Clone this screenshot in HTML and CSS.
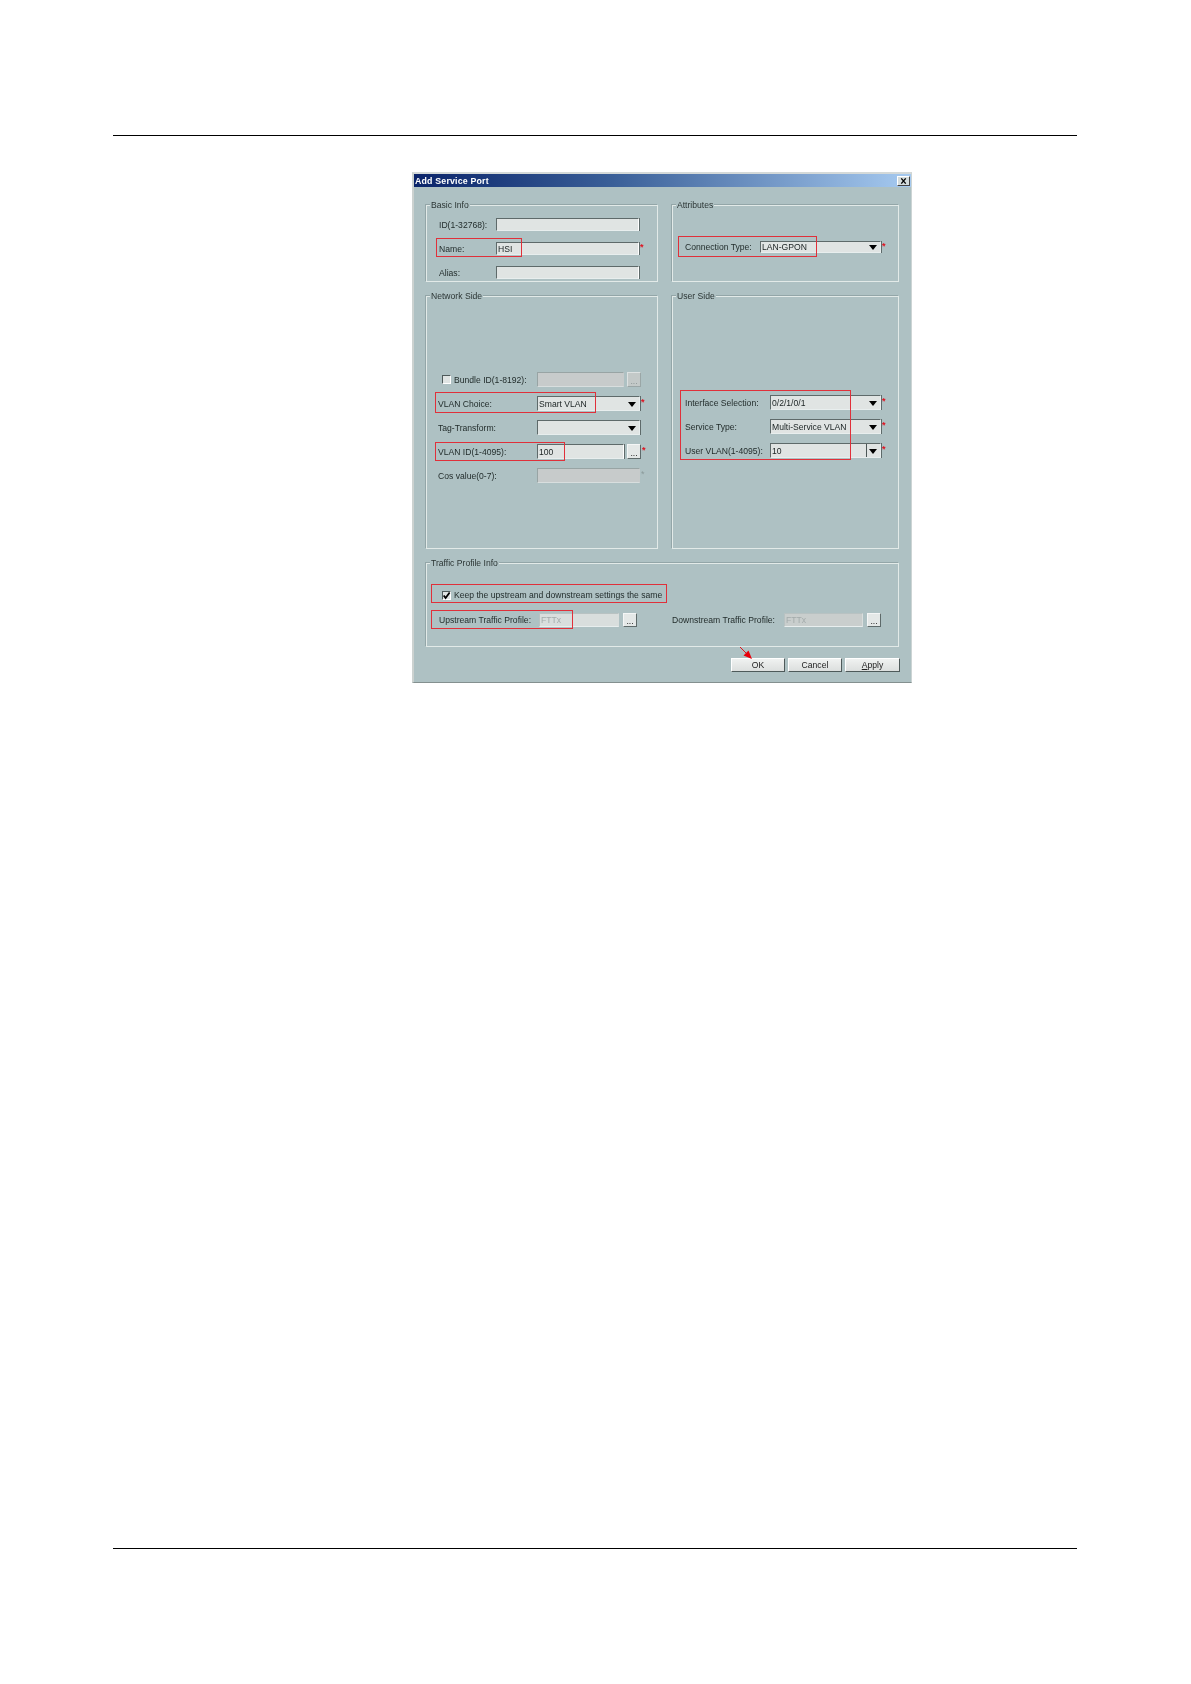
FILE: index.html
```html
<!DOCTYPE html>
<html lang="en">
<head>
<meta charset="utf-8">
<title>Add Service Port</title>
<link rel="stylesheet" href="styles.css">
</head>
<body>
<div class="page">
  <div class="rule rule-top"></div>
  <div class="figure">
    <div class="dialog">
      <div class="titlebar">
        <span class="title">Add Service Port</span>
        <span class="close"><svg viewBox="0 0 11 9" width="11" height="8"><path d="M3 1.5 L8 7.5 M8 1.5 L3 7.5" stroke="#000" stroke-width="1.5" fill="none"/></svg></span>
      </div>
      <div class="body">
        <div class="top-grid">
          <div class="group g-basic">
            <div class="legend">Basic Info</div>
            <div class="rows">
              <div class="row"><span class="label">ID(1-32768):</span><span class="field"></span></div>
              <div class="row"><span class="label">Name:</span><span class="field">HSI</span><span class="star">*</span></div>
              <div class="row"><span class="label">Alias:</span><span class="field"></span></div>
            </div>
          </div>
          <div class="group g-attr">
            <div class="legend">Attributes</div>
            <div class="rows">
              <div class="row"><span class="label">Connection Type:</span><span class="field select">LAN-GPON<i class="caret"></i></span><span class="star">*</span></div>
            </div>
          </div>
          <div class="group g-net">
            <div class="legend">Network Side</div>
            <div class="rows">
              <div class="row"><span class="label check-label"><span class="check"></span>Bundle ID(1-8192):</span><span class="field off narrow"></span><span class="more off-btn">...</span></div>
              <div class="row"><span class="label">VLAN Choice:</span><span class="field select">Smart VLAN<i class="caret"></i></span><span class="star">*</span></div>
              <div class="row"><span class="label">Tag-Transform:</span><span class="field select"><i class="caret"></i></span></div>
              <div class="row"><span class="label">VLAN ID(1-4095):</span><span class="field narrow">100</span><span class="more">...</span><span class="star">*</span></div>
              <div class="row"><span class="label">Cos value(0-7):</span><span class="field off"></span><span class="star star-off">*</span></div>
            </div>
          </div>
          <div class="group g-user">
            <div class="legend">User Side</div>
            <div class="rows">
              <div class="row"><span class="label">Interface Selection:</span><span class="field select">0/2/1/0/1<i class="caret"></i></span><span class="star">*</span></div>
              <div class="row"><span class="label">Service Type:</span><span class="field select">Multi-Service VLAN<i class="caret"></i></span><span class="star">*</span></div>
              <div class="row"><span class="label">User VLAN(1-4095):</span><span class="field select combo">10<i class="caret"></i></span><span class="star">*</span></div>
            </div>
          </div>
        </div>
        <div class="group g-traffic">
          <div class="legend">Traffic Profile Info</div>
          <div class="row keep"><span class="check checked"><svg viewBox="0 0 8 8" width="9" height="9"><path d="M1.5 4 L3.2 6.2 L6.8 1.4" stroke="#000" stroke-width="1.6" fill="none"/></svg></span><span class="keep-text">Keep the upstream and downstream settings the same</span></div>
          <div class="row profiles">
            <span class="label up-label">Upstream Traffic Profile:</span><span class="field ghost up-field">FTTx</span><span class="more">...</span>
            <span class="label down-label">Downstream Traffic Profile:</span><span class="field ghost off down-field">FTTx</span><span class="more">...</span>
          </div>
        </div>
        <div class="actions">
          <span class="btn">OK</span>
          <span class="btn">Cancel</span>
          <span class="btn"><u>A</u>pply</span>
        </div>
      </div>
      <span class="mark m-name"></span>
      <span class="mark m-conn"></span>
      <span class="mark m-choice"></span>
      <span class="mark m-vlan"></span>
      <span class="mark m-user"></span>
      <span class="mark m-keep"></span>
      <span class="mark m-up"></span>
      <svg class="arrow" viewBox="0 0 14 14" width="14" height="14"><path d="M1 1 L9 9" stroke="#e0141c" stroke-width="1" fill="none"/><path d="M13 13 L4.5 9.5 L9.5 4.5 Z" fill="#e8000c"/></svg>
    </div>
  </div>
  <div class="rule rule-bottom"></div>
</div>
</body>
</html>
```
FILE: styles.css
```css
* { box-sizing: border-box; }
html, body { margin: 0; padding: 0; background: #fff; }
.page {
  height: 1684px;
  padding: 135px 114px 135px 113px;
  display: flex;
  flex-direction: column;
  font-family: "Liberation Sans", Arial, sans-serif;
}
.rule { height: 1px; background: #000; flex: none; }
.rule-bottom { margin-top: auto; }
.figure { margin: 36px 0 0 299px; }

.dialog {
  position: relative;
  width: 500px;
  height: 511px;
  background: #aec1c3;
  border-style: solid;
  border-width: 2px 1px 1px 2px;
  border-color: #d4d9d8 #ccd4d4 #84908f #ccd2d0;
  font-size: 8.6px;
  line-height: 12px;
  color: #1f2928;
  filter: blur(0.45px);
}
.titlebar {
  height: 13px;
  display: flex;
  align-items: center;
  justify-content: space-between;
  padding: 0 1px 0 1px;
  background: linear-gradient(90deg, #0a246a 0%, #3a5f98 40%, #a6caf0 100%);
}
.title { color: #fff; font-weight: 700; font-size: 8.8px; letter-spacing: .18px; }
.close {
  width: 13px;
  height: 10px;
  display: flex;
  align-items: center;
  justify-content: center;
  background: #d4dcdc;
  border: 1px solid;
  border-color: #fff #444 #444 #fff;
}
.body { padding: 18px 10px 0 12px; }
.top-grid {
  display: grid;
  grid-template-columns: 232px 227px;
  grid-template-rows: 77px 253px;
  column-gap: 14px;
  row-gap: 14px;
}
.group {
  border: 1px solid #e2eae8;
  box-shadow: -1px -1px 0 #93a6a8;
}
.legend {
  width: fit-content;
  height: 12px;
  margin: -7px 0 0 3px;
  padding: 0 1px;
  background: #aec1c3;
  color: #2b3534;
}
.rows { display: flex; flex-direction: column; }
.row { display: flex; align-items: center; }
.label { flex: none; white-space: nowrap; }
.field {
  flex: none;
  position: relative;
  display: flex;
  align-items: center;
  height: 100%;
  padding-left: 1px;
  background: #e0e4e3;
  border: 1px solid;
  border-color: #5e6a6a #fff #e8eeee #5e6a6a;
  box-shadow: 1px 0 0 #5e6a6a;
  color: #1a2222;
  white-space: nowrap;
}
.field.off { background: #c7cbcb; border-color: #98a4a4 #c7cbcb #d8dede #98a4a4; box-shadow: none; }
.field.ghost { color: #a3abab; background: #d9dedd; border-color: #b8c2c2 #d9dedd #e8eeee #b8c2c2; box-shadow: none; }
.field.ghost.off { background: #c9cecd; }
.select { border-color: #5e6a6a #e8eeee #e8eeee #5e6a6a; }
.caret {
  position: absolute;
  right: 3px;
  top: 50%;
  margin-top: -2px;
  border-style: solid;
  border-width: 5px 4px 0;
  border-color: #000 transparent transparent;
}
.combo::after {
  content: "";
  position: absolute;
  right: 13px;
  top: 0;
  bottom: 0;
  width: 1px;
  background: #4c5757;
}
.star { color: #e0101e; font-size: 9px; font-weight: 700; margin: -3px 0 0 1px; width: 5px; }
.star-off { color: #8a9a9a; font-weight: 400; }
.more {
  flex: none;
  width: 14px;
  height: 100%;
  margin-left: 3px;
  display: flex;
  align-items: flex-end;
  justify-content: center;
  background: #e4e8e7;
  border: 1px solid;
  border-color: #f4f6f6 #5e6a6a #5e6a6a #f4f6f6;
  line-height: 10px;
  color: #222;
}
.off-btn { background: #c3c9c8; border-color: #dde2e2 #9aa6a6 #9aa6a6 #dde2e2; color: #8c9696; }

.g-basic .rows { padding: 7px 0 0 12px; row-gap: 11px; }
.g-basic .row { height: 13px; }
.g-basic .label { width: 57px; }
.g-basic .field { width: 143px; }

.g-attr .rows { padding: 30px 0 0 12px; }
.g-attr .row { height: 12px; }
.g-attr .label { width: 75px; }
.g-attr .field { width: 121px; }

.g-net .rows { padding: 70px 0 0 11px; row-gap: 9px; }
.g-net .row { height: 15px; }
.g-net .label { width: 99px; }
.g-net .field { width: 103px; }
.g-net .field.narrow { width: 87px; }
.check-label { display: flex; align-items: center; padding-left: 4px; }
.check {
  flex: none;
  display: block;
  width: 9px;
  height: 9px;
  margin-right: 3px;
  background: #dfe4e3;
  border: 1px solid;
  border-color: #4e5a5a #fff #fff #4e5a5a;
  position: relative;
}
.check svg { position: absolute; left: -1px; top: -1px; }

.g-user .rows { padding: 93px 0 0 12px; row-gap: 9px; }
.g-user .row { height: 15px; }
.g-user .label { width: 85px; }
.g-user .field { width: 111px; }

.g-traffic { width: 473px; height: 84px; margin-top: 14px; }
.keep { height: 10px; margin: 21px 0 0 15px; }
.keep .check { margin-right: 3px; }
.keep-text { white-space: nowrap; }
.profiles { height: 14px; margin: 13px 0 0 12px; }
.up-label { width: 100px; }
.up-field { width: 80px; }
.profiles .more { margin-left: 4px; }
.down-label { width: 112px; margin-left: 35px; }
.down-field { width: 79px; }

.actions { display: flex; gap: 3px; margin: 11px 0 0 305px; }
.btn {
  width: 54px;
  height: 14px;
  display: flex;
  align-items: center;
  justify-content: center;
  background: linear-gradient(#f0f2f1, #dcdfde);
  border: 1px solid;
  border-color: #fff #4e5a5a #4e5a5a #fff;
  color: #222;
}
.btn:last-child { width: 55px; }

.mark { position: absolute; border: 1px solid #e0303a; pointer-events: none; }
.m-name { left: 22px; top: 64px; width: 86px; height: 19px; }
.m-conn { left: 264px; top: 62px; width: 139px; height: 21px; }
.m-choice { left: 21px; top: 218px; width: 161px; height: 21px; }
.m-vlan { left: 21px; top: 268px; width: 130px; height: 19px; }
.m-user { left: 266px; top: 216px; width: 171px; height: 70px; }
.m-keep { left: 17px; top: 410px; width: 236px; height: 19px; }
.m-up { left: 17px; top: 436px; width: 142px; height: 19px; }
.arrow { position: absolute; left: 325px; top: 472px; }
```
